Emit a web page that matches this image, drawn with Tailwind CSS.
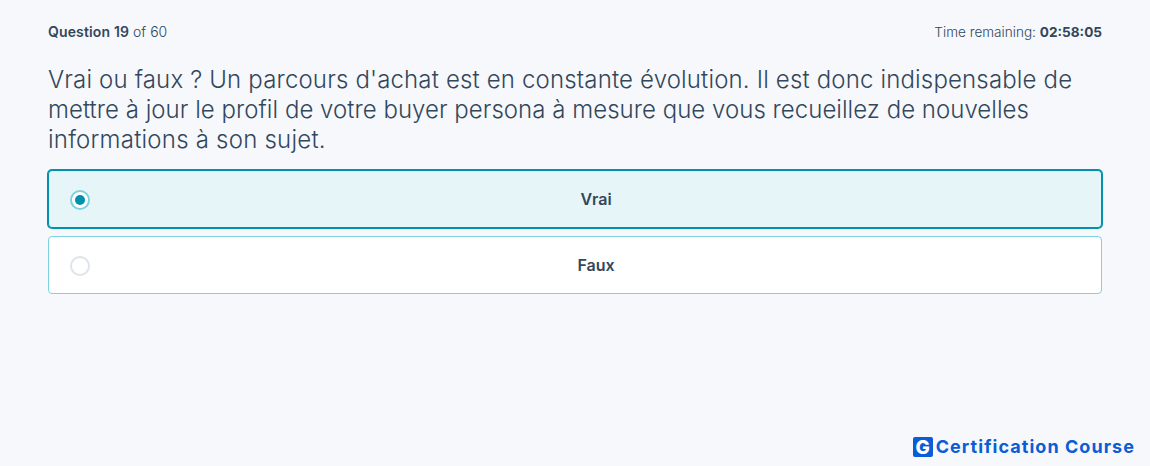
<!DOCTYPE html>
<html>
<head>
<meta charset="utf-8">
<script src="https://cdn.jsdelivr.net/npm/@tailwindcss/browser@4"></script>
</head>
<body class="m-0 h-[466px] w-[1150px] overflow-hidden bg-[#f6f8fb] font-['Inter',sans-serif] text-[#33475b]">
<div class="relative flex h-full flex-col px-12 pt-6">
  <div class="flex items-center justify-between leading-4">
    <div class="text-[14px]"><span class="font-semibold tracking-[0.15px]">Question 19</span> <span class="font-light">of 60</span></div>
    <div class="text-[13.6px] font-light">Time remaining: <span class="font-bold">02:58:05</span></div>
  </div>
  <h1 class="mt-[25px] whitespace-nowrap text-[24px] font-[350] leading-[30px]">
    <span class="block tracking-[0.16px]">Vrai ou faux ? Un parcours d'achat est en constante évolution. Il est donc indispensable de</span>
    <span class="block tracking-[0.03px]">mettre à jour le profil de votre buyer persona à mesure que vous recueillez de nouvelles</span>
    <span class="block tracking-[0.22px]">informations à son sujet.</span>
  </h1>
  <div class="mt-[15px] flex flex-col gap-2">
    <div class="relative flex h-[58px] items-center justify-center rounded-[4px] border border-[#0091ae] bg-[#e5f5f8] pl-[42px] text-[16px] font-semibold ring-1 ring-[#0091ae]">
      <span class="absolute left-[21px] top-[19px] flex h-5 w-5 items-center justify-center rounded-full border-2 border-[#7fd1de] bg-white"><span class="h-[10px] w-[10px] rounded-full bg-[#0091ae]"></span></span>
      Vrai
    </div>
    <div class="relative flex h-[58px] items-center justify-center rounded-[4px] border border-[#7dd3e0] bg-white pl-[42px] text-[16px] font-semibold">
      <span class="absolute left-[21px] top-[19px] h-5 w-5 rounded-full border-2 border-[#dfe3eb] bg-white"></span>
      Faux
    </div>
  </div>
  <div class="absolute bottom-[9px] right-[15px] flex items-center gap-[3px] text-[#0b5cd5]">
    <span class="flex h-5 w-5 items-center justify-center rounded-[2px] bg-[#0b5cd5] text-[19px] font-extrabold leading-none text-white">G</span>
    <span class="text-[18px] font-bold leading-5 tracking-[1.05px]">Certification Course</span>
  </div>
</div>
</body>
</html>
